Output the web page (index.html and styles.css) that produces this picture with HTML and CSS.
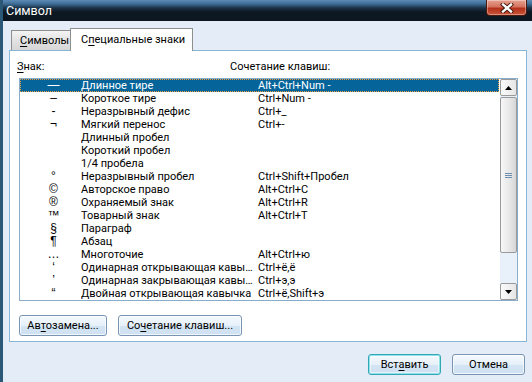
FILE: index.html
```html
<!DOCTYPE html>
<html lang="ru">
<head>
<meta charset="utf-8">
<title>Символ</title>
<link rel="stylesheet" href="styles.css">
</head>
<body>
<div class="window">
  <div class="titlebar">
    <span class="title">Символ</span>
    <div class="close">
      <svg width="14" height="10" viewBox="0 0 14 10">
        <path d="M3 1.5 L11 8.5 M11 1.5 L3 8.5" stroke="#3a1208" stroke-width="4.2" stroke-linecap="square" fill="none"/>
        <path d="M3 1.5 L11 8.5 M11 1.5 L3 8.5" stroke="#ffffff" stroke-width="2.4" stroke-linecap="square" fill="none"/>
      </svg>
    </div>
  </div>
  <div class="client">
    <div class="tabs">
      <div class="tab"><u>С</u>имволы</div>
      <div class="tab active">С<u>п</u>ециальные знаки</div>
    </div>
    <div class="panel">
      <div class="list-head">
        <span class="h-sym"><u>З</u>нак:</span>
        <span class="h-keys">Сочетание клавиш:</span>
      </div>
      <div class="listbox">
        <div class="rows">
          <div class="row selected"><span class="sym">—</span><span class="name">Длинное тире</span><span class="keys">Alt+Ctrl+Num -</span></div>
          <div class="row"><span class="sym">–</span><span class="name">Короткое тире</span><span class="keys">Ctrl+Num -</span></div>
          <div class="row"><span class="sym">-</span><span class="name">Неразрывный дефис</span><span class="keys">Ctrl+_</span></div>
          <div class="row"><span class="sym">¬</span><span class="name">Мягкий перенос</span><span class="keys">Ctrl+-</span></div>
          <div class="row"><span class="sym"></span><span class="name">Длинный пробел</span><span class="keys"></span></div>
          <div class="row"><span class="sym"></span><span class="name">Короткий пробел</span><span class="keys"></span></div>
          <div class="row"><span class="sym"></span><span class="name">1/4 пробела</span><span class="keys"></span></div>
          <div class="row"><span class="sym">°</span><span class="name">Неразрывный пробел</span><span class="keys">Ctrl+Shift+Пробел</span></div>
          <div class="row"><span class="sym">©</span><span class="name">Авторское право</span><span class="keys">Alt+Ctrl+C</span></div>
          <div class="row"><span class="sym">®</span><span class="name">Охраняемый знак</span><span class="keys">Alt+Ctrl+R</span></div>
          <div class="row"><span class="sym">™</span><span class="name">Товарный знак</span><span class="keys">Alt+Ctrl+T</span></div>
          <div class="row"><span class="sym">§</span><span class="name">Параграф</span><span class="keys"></span></div>
          <div class="row"><span class="sym">¶</span><span class="name">Абзац</span><span class="keys"></span></div>
          <div class="row"><span class="sym">…</span><span class="name">Многоточие</span><span class="keys">Alt+Ctrl+ю</span></div>
          <div class="row"><span class="sym">‘</span><span class="name">Одинарная открывающая кавычка</span><span class="keys">Ctrl+ё,ё</span></div>
          <div class="row"><span class="sym">’</span><span class="name">Одинарная закрывающая кавычка</span><span class="keys">Ctrl+э,э</span></div>
          <div class="row"><span class="sym">“</span><span class="name">Двойная открывающая кавычка</span><span class="keys">Ctrl+ё,Shift+э</span></div>
        </div>
        <div class="scrollbar">
          <div class="sb-btn">
            <svg width="7" height="4" viewBox="0 0 7 4"><path d="M0 4 L3.5 0 L7 4 Z" fill="#000"/></svg>
          </div>
          <div class="sb-track">
            <div class="sb-thumb">
              <svg width="7" height="7" viewBox="0 0 7 7"><path d="M0 1.5 H7 M0 3.5 H7 M0 5.5 H7" stroke="#6d8fb0" stroke-width="1"/></svg>
            </div>
          </div>
          <div class="sb-btn">
            <svg width="7" height="4" viewBox="0 0 7 4"><path d="M0 0 L3.5 4 L7 0 Z" fill="#000"/></svg>
          </div>
        </div>
      </div>
      <div class="panel-buttons">
        <div class="btn w-auto">Ав<u>т</u>озамена...</div>
        <div class="btn w-keys">Со<u>ч</u>етание клавиш...</div>
      </div>
    </div>
    <div class="dialog-buttons">
      <div class="btn default">Вст<u>а</u>вить</div>
      <div class="btn">Отмена</div>
    </div>
  </div>
</div>
</body>
</html>
```
FILE: styles.css
```css
* { box-sizing: border-box; }
html, body {
  margin: 0;
  padding: 0;
  width: 532px;
  height: 382px;
  overflow: hidden;
  background: #e4edf7;
  font-family: Roboto, "Liberation Sans", Arial, sans-serif;
  font-size: 11px;
  color: #000;
}
u { text-decoration: underline; text-underline-offset: 2px; }

.window {
  height: 382px;
  border-left: 3px solid #2c5878;
  background: #e4edf7;
}

.titlebar {
  height: 21px;
  display: flex;
  align-items: flex-start;
  background: linear-gradient(#5b8cb6 0px, #3d6b93 4px, #1b3247 8px, #0c1822 12px, #0b1620 21px);
  color: #fff;
}
.title {
  padding: 4px 0 0 3px;
  line-height: 13px;
  font-size: 12.5px;
}
.close {
  margin-left: auto;
  margin-right: 5px;
  width: 41px;
  height: 16px;
  border: 1px solid #4a1a10;
  border-top: none;
  border-radius: 0 0 4px 4px;
  background: linear-gradient(#e6a192 0%, #d4735e 45%, #b4301a 55%, #c9553a 100%);
  box-shadow: inset 0 0 0 1px rgba(255, 255, 255, 0.35);
  display: flex;
  align-items: center;
  justify-content: center;
}
.close svg { display: block; }

.client {
  padding-top: 7px;
}

.tabs {
  display: flex;
  align-items: flex-end;
  margin-left: 8px;
  height: 23px;
  position: relative;
  z-index: 1;
  margin-bottom: -1px;
}
.tab {
  height: 20px;
  width: 59px;
  border: 1px solid #8e8f8f;
  border-bottom: none;
  border-right: none;
  background: linear-gradient(#f4f4f4, #e4e4e4 45%, #d6d6d6);
  padding: 3px 0 0 8px;
  line-height: 14px;
  margin-bottom: 1px;
  white-space: nowrap;
}
.tab.active {
  height: 23px;
  width: 123px;
  border-right: 1px solid #8e8f8f;
  background: #fff;
  padding: 4px 0 0 10px;
  margin-bottom: 0;
}

.panel {
  margin-left: 6px;
  width: 518px;
  height: 292px;
  border: 1px solid #8ab6d6;
  background: #fff;
  padding: 9px 0 0 7px;
}

.list-head {
  display: flex;
  line-height: 14px;
  height: 14px;
}
.h-sym { width: 213px; }

.listbox {
  margin: 4px 0 0 2px;
  width: 499px;
  height: 223px;
  border: 1px solid #8aaccb;
  display: flex;
  background: #fff;
}
.rows {
  width: 480px;
  display: flex;
  flex-direction: column;
}
.row {
  display: flex;
  height: 13px;
  line-height: 13px;
  white-space: nowrap;
}
.row.selected {
  width: 479px;
  background: #05659b;
  color: #fff;
  outline: 1px dotted #e8a040;
  outline-offset: -1px;
}
.sym {
  width: 61px;
  padding-left: 6px;
  text-align: center;
  font-family: "Liberation Sans", Arial, sans-serif;
  font-size: 12px;
}
.name {
  width: 176px;
  overflow: hidden;
  text-overflow: ellipsis;
}
.keys { padding-left: 1px; }

.scrollbar {
  width: 17px;
  display: flex;
  flex-direction: column;
  background: #e8f1fa;
}
.sb-btn {
  height: 17px;
  border: 1px solid #9a9a9a;
  border-radius: 2px;
  background: linear-gradient(90deg, #fbfbfb, #e6e6e6);
  display: flex;
  align-items: center;
  justify-content: center;
}
.sb-btn svg { display: block; }
.sb-track {
  flex: 1;
  padding: 1px 0 30px;
}
.sb-thumb {
  height: 156px;
  border: 1px solid #9a9a9a;
  border-radius: 2px;
  background: linear-gradient(90deg, #f7f7f7, #e6e6e6 60%, #d6d6d6);
  display: flex;
  align-items: center;
  justify-content: center;
}
.sb-thumb svg { display: block; }

.panel-buttons {
  display: flex;
  gap: 11px;
  margin: 14px 0 0 2px;
}

.btn {
  height: 21px;
  border: 1px solid #7896b4;
  border-radius: 3px;
  background: linear-gradient(#f5f9fd, #e6f0f9 50%, #d3e5f4 51%, #cfe1f2);
  box-shadow: inset 0 0 0 1px rgba(255, 255, 255, 0.7);
  text-align: center;
  line-height: 19px;
  width: 73px;
  white-space: nowrap;
}
.w-auto { width: 88px; }
.w-keys { width: 124px; }
.btn.default {
  border-color: #33a7b3;
  box-shadow: inset 0 0 0 1px #8ee3ea, inset 0 0 0 2px rgba(255, 255, 255, 0.5);
}

.dialog-buttons {
  display: flex;
  justify-content: flex-end;
  gap: 11px;
  margin-top: 12px;
  padding-right: 7px;
}
```
